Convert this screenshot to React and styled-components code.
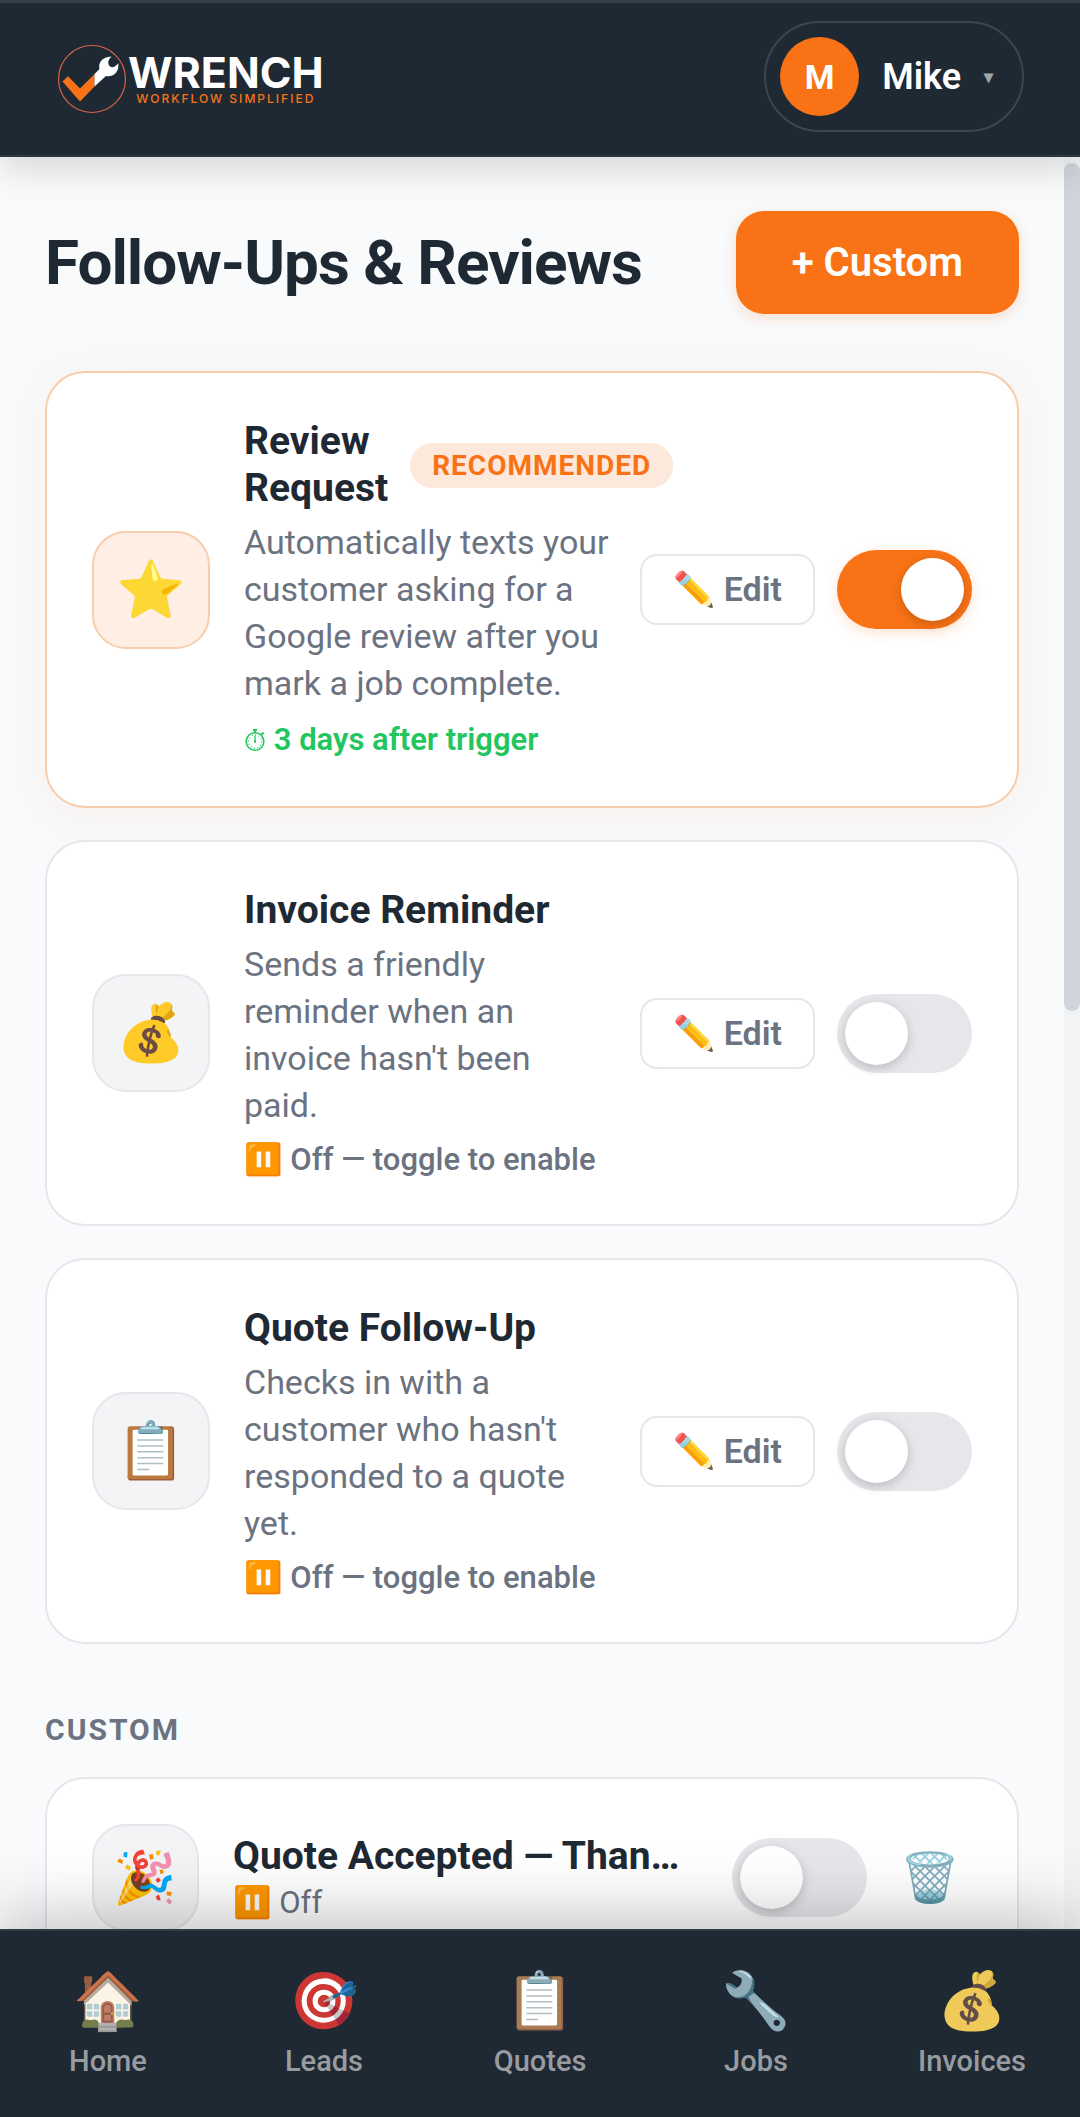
import React, { useState } from "react";
import styled, { createGlobalStyle } from "styled-components";

const GlobalStyle = createGlobalStyle`
  *, *::before, *::after { box-sizing: border-box; }
  body {
    margin: 0;
    background: #f8fafc;
    color: #1f2933;
    font-family: Roboto, "Noto Color Emoji", sans-serif;
  }
  button { font-family: inherit; cursor: pointer; }
  h1, h2, h3, p { margin: 0; }
`;

const Page = styled.div`
  display: flex;
  flex-direction: column;
  height: 100vh;
  overflow: hidden;
`;

const Header = styled.header`
  position: relative;
  z-index: 2;
  flex: none;
  display: flex;
  align-items: center;
  justify-content: space-between;
  padding: 18px 56px 23px;
  background: #1f2933;
  border-top: 3px solid #35404a;
  border-bottom: 2px solid #2f3841;
  box-shadow: 0 11px 34px rgba(0, 0, 0, 0.15);
`;

const Brand = styled.a`
  display: flex;
  align-items: center;
  padding-top: 4px;
  color: #ffffff;
  text-decoration: none;
`;

const BrandMark = styled.svg`
  display: block;
  width: 72px;
  height: 72px;
`;

const BrandText = styled.span`
  display: flex;
  flex-direction: column;
  align-items: center;
  font-family: Inter, sans-serif;
`;

const BrandName = styled.span`
  font-size: 43px;
  line-height: 41px;
  font-weight: 700;
`;

const BrandTag = styled.span`
  font-size: 12px;
  line-height: 12px;
  font-weight: 500;
  letter-spacing: 2px;
  color: #f97316;
`;

const UserButton = styled.button`
  display: flex;
  align-items: center;
  gap: 23px;
  padding: 14px 29px 14px 14px;
  border: 2px solid #3b4650;
  border-radius: 56px;
  background: transparent;
  color: #ffffff;
  font-size: 36px;
  font-weight: 600;
`;

const Avatar = styled.span`
  display: grid;
  place-items: center;
  width: 79px;
  height: 79px;
  border-radius: 50%;
  background: #f97316;
  font-size: 34px;
  font-weight: 700;
`;

const Caret = styled.span`
  font-size: 18px;
  line-height: 24px;
  color: #a0a6ac;
`;

const Body = styled.div`
  flex: 1;
  min-height: 0;
  display: flex;
`;

const Main = styled.main`
  flex: 1;
  min-width: 0;
  overflow: hidden;
  padding: 54px 45px 0;
`;

const ScrollTrack = styled.div`
  flex: none;
  width: 16px;
  padding-top: 6px;
  background: #f2f3f5;
`;

const ScrollThumb = styled.div`
  height: 48%;
  border-radius: 8px;
  background: #d1d5db;
`;

const TitleRow = styled.div`
  display: flex;
  align-items: center;
  justify-content: space-between;
  margin-bottom: 57px;
`;

const PageTitle = styled.h1`
  font-size: 62px;
  line-height: 72px;
  font-weight: 700;
  letter-spacing: -1px;
`;

const PrimaryButton = styled.button`
  padding: 28px 56px;
  border: 0;
  border-radius: 28px;
  background: #f97316;
  color: #ffffff;
  font-size: 40px;
  line-height: 47px;
  font-weight: 600;
  box-shadow: 0 4px 14px rgba(249, 115, 22, 0.2);
`;

const CardList = styled.div`
  display: flex;
  flex-direction: column;
  gap: 32px;
`;

const Card = styled.article`
  display: flex;
  align-items: center;
  gap: 34px;
  padding: 45px;
  border: 2px solid ${(p) => (p.$on ? "#f7cdab" : "#e5e7eb")};
  border-radius: 40px;
  background: #ffffff;
  box-shadow: ${(p) => (p.$on ? "0 6px 44px rgba(249, 115, 22, 0.08)" : "none")};
`;

const IconTile = styled.span`
  flex: none;
  display: grid;
  place-items: center;
  width: ${(p) => (p.$small ? 107 : 118)}px;
  height: ${(p) => (p.$small ? 107 : 118)}px;
  border: 2px solid ${(p) => (p.$on ? "#f7cdab" : "#e5e7eb")};
  border-radius: 34px;
  background: ${(p) => (p.$on ? "#feeee4" : "#f3f4f6")};
  font-size: ${(p) => (p.$small ? 51 : 56)}px;
  line-height: 1;
`;

const CardText = styled.div`
  flex: 1;
  min-width: 0;
`;

const RuleText = styled(CardText)`
  margin-right: -6px;
`;

const CardHead = styled.div`
  display: flex;
  align-items: center;
  gap: 22px;
  margin-bottom: 7px;
`;

const CardTitle = styled.h2`
  font-size: 39px;
  line-height: 47px;
  font-weight: 700;
`;

const RuleTitle = styled(CardTitle)`
  width: ${(p) => (p.$stacked ? "min-content" : "auto")};
`;

const ShortTitle = styled(CardTitle)`
  overflow: hidden;
  white-space: nowrap;
  text-overflow: ellipsis;
`;

const Badge = styled.span`
  flex: none;
  padding: 6px 22px;
  border-radius: 22px;
  background: #fde9dc;
  color: #f97316;
  font-size: 28px;
  line-height: 33px;
  font-weight: 700;
  letter-spacing: 1px;
`;

const Description = styled.p`
  font-size: 34px;
  line-height: 47px;
  color: #6b7280;
`;

const Status = styled.p`
  margin-top: 12px;
  font-size: 31px;
  line-height: ${(p) => (p.$on ? 42 : 38)}px;
  font-weight: ${(p) => (p.$on ? 600 : 500)};
  color: ${(p) => (p.$on ? "#22c55e" : "#6b7280")};
`;

const StopwatchIcon = styled.svg`
  width: 22px;
  height: 24px;
  vertical-align: -2px;
`;

const ShortStatus = styled.p`
  margin-top: 3px;
  font-size: 31px;
  line-height: 40px;
  color: #6b7280;
`;

const Actions = styled.div`
  flex: none;
  display: flex;
  align-items: center;
  gap: 22px;
`;

const EditButton = styled.button`
  padding: 14px 31px;
  border: 2px solid #e5e7eb;
  border-radius: 17px;
  background: #ffffff;
  color: #6b7280;
  font-size: 34px;
  line-height: 39px;
  font-weight: 600;
`;

const Toggle = styled.input`
  appearance: none;
  display: flex;
  align-items: center;
  width: 135px;
  height: 79px;
  margin: 0;
  padding: 8px;
  border-radius: 40px;
  background: #e5e7eb;
  cursor: pointer;

  &::before {
    content: "";
    width: 63px;
    height: 63px;
    border-radius: 50%;
    background: #ffffff;
    box-shadow: 0 3px 11px rgba(0, 0, 0, 0.2);
  }

  &:checked {
    justify-content: flex-end;
    background: #f97316;
    box-shadow: 0 4px 14px rgba(249, 115, 22, 0.2);
  }
`;

const DeleteButton = styled.button`
  width: 83px;
  padding: 0;
  border: 0;
  background: transparent;
  font-size: 48px;
  line-height: 62px;
`;

const SectionLabel = styled.h3`
  margin: 67px 0 29px;
  font-size: 30px;
  line-height: 37px;
  font-weight: 700;
  letter-spacing: 2px;
  color: #6b7280;
`;

const Nav = styled.nav`
  position: relative;
  z-index: 2;
  flex: none;
  display: flex;
  height: 188px;
  padding-top: 36px;
  background: #1f2933;
  border-top: 2px solid #2f3c44;
  box-shadow: 0 -11px 68px rgba(0, 0, 0, 0.25);
`;

const NavLink = styled.a`
  flex: 1;
  display: flex;
  flex-direction: column;
  align-items: center;
  gap: 9px;
  color: #989ca1;
  font-size: 29px;
  line-height: 34px;
  font-weight: 500;
  text-decoration: none;
`;

const NavIcon = styled.span`
  font-size: 56px;
  line-height: 68px;
  filter: grayscale(0.3);
`;

const rules = [
  {
    icon: "⭐",
    title: "Review Request",
    badge: "RECOMMENDED",
    text: "Automatically texts your customer asking for a Google review after you mark a job complete.",
    status: "3 days after trigger",
    on: true,
  },
  {
    icon: "💰",
    title: "Invoice Reminder",
    text: "Sends a friendly reminder when an invoice hasn't been paid.",
  },
  {
    icon: "📋",
    title: "Quote Follow-Up",
    text: "Checks in with a customer who hasn't responded to a quote yet.",
  },
];

const links = [
  ["🏠", "Home"],
  ["🎯", "Leads"],
  ["📋", "Quotes"],
  ["🔧", "Jobs"],
  ["💰", "Invoices"],
];

function Switch({ label, initial }) {
  const [on, setOn] = useState(Boolean(initial));
  return (
    <Toggle
      type="checkbox"
      role="switch"
      aria-label={label}
      checked={on}
      onChange={(e) => setOn(e.target.checked)}
    />
  );
}

function Logo() {
  return (
    <Brand href="#home">
      <BrandMark viewBox="0 0 72 72" aria-hidden="true">
        <circle cx="36" cy="36" r="33.5" fill="none" stroke="#d9634a" strokeWidth="1.2" />
        <path d="M6.5 38.5 12 33.2 24 45.5 38.5 31 38.5 43.5 24 58.5Z" fill="#f97316" />
        <path
          d="M38.5 43.5V31L43.5 26C42 20 46 14 55.5 13.6C52 17 51.5 20 53.5 23C56 25.5 59 24 62.3 20.2C63.5 28 58 34.5 50 33Z"
          fill="#ffffff"
        />
      </BrandMark>
      <BrandText>
        <BrandName>WRENCH</BrandName>
        <BrandTag>WORKFLOW SIMPLIFIED</BrandTag>
      </BrandText>
    </Brand>
  );
}

function Stopwatch() {
  return (
    <StopwatchIcon viewBox="0 0 22 24" aria-hidden="true" fill="none" stroke="currentColor">
      <circle cx="11" cy="13.5" r="8.8" strokeWidth="1.6" />
      <circle cx="11" cy="13.5" r="6.6" strokeWidth="1.1" strokeDasharray="1 2.45" />
      <path d="M11 7.5V13.5" strokeWidth="1.3" />
      <circle cx="11" cy="13.5" r="1.2" fill="currentColor" stroke="none" />
      <path d="M9 2H13M11 2V4.5M18 4.5 19.6 6.1M18.8 5.2 17 7" strokeWidth="1.8" />
    </StopwatchIcon>
  );
}

function RuleCard({ rule }) {
  return (
    <Card $on={rule.on}>
      <IconTile $on={rule.on}>{rule.icon}</IconTile>
      <RuleText>
        <CardHead>
          <RuleTitle $stacked={Boolean(rule.badge)}>{rule.title}</RuleTitle>
          {rule.badge && <Badge>{rule.badge}</Badge>}
        </CardHead>
        <Description>{rule.text}</Description>
        <Status $on={rule.on}>
          {rule.on ? (
            <>
              <Stopwatch /> {rule.status}
            </>
          ) : (
            "⏸️ Off — toggle to enable"
          )}
        </Status>
      </RuleText>
      <Actions>
        <EditButton type="button">✏️ Edit</EditButton>
        <Switch label={rule.title} initial={rule.on} />
      </Actions>
    </Card>
  );
}

export default function App() {
  return (
    <Page>
      <GlobalStyle />
      <Header>
        <Logo />
        <UserButton type="button">
          <Avatar>M</Avatar>
          Mike
          <Caret>▾</Caret>
        </UserButton>
      </Header>
      <Body>
        <Main>
          <TitleRow>
            <PageTitle>Follow-Ups &amp; Reviews</PageTitle>
            <PrimaryButton type="button">+ Custom</PrimaryButton>
          </TitleRow>
          <CardList>
            {rules.map((rule) => (
              <RuleCard key={rule.title} rule={rule} />
            ))}
          </CardList>
          <SectionLabel>CUSTOM</SectionLabel>
          <Card>
            <IconTile $small>🎉</IconTile>
            <CardText>
              <ShortTitle>Quote Accepted — Thank You</ShortTitle>
              <ShortStatus>⏸️ Off</ShortStatus>
            </CardText>
            <Actions>
              <Switch label="Quote Accepted" />
              <DeleteButton type="button" aria-label="Delete">🗑️</DeleteButton>
            </Actions>
          </Card>
        </Main>
        <ScrollTrack>
          <ScrollThumb />
        </ScrollTrack>
      </Body>
      <Nav>
        {links.map(([icon, label]) => (
          <NavLink key={label} href={`#${label.toLowerCase()}`}>
            <NavIcon>{icon}</NavIcon>
            {label}
          </NavLink>
        ))}
      </Nav>
    </Page>
  );
}
